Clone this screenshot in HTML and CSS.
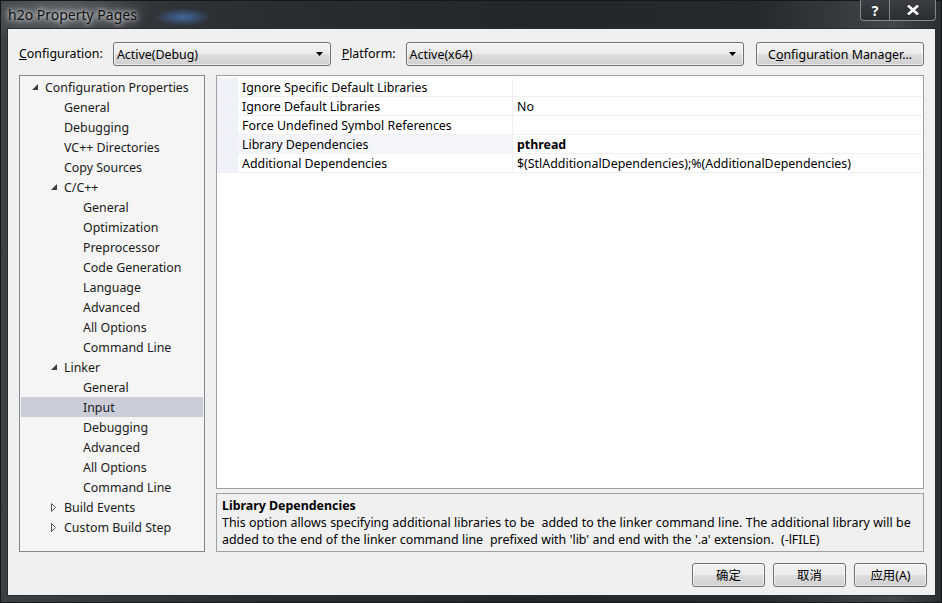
FILE: index.html
```html
<!DOCTYPE html>
<html lang="zh-CN">
<head>
  <meta charset="UTF-8">
  <title>h2o Property Pages</title>
  <link rel="stylesheet" href="styles.css">
</head>
<body>
  <div class="window">
    <div class="titlebar">
      <span class="title">h2o Property Pages</span>
      <div class="caption-btns">
        <div class="cap-btn cap-help">?</div>
        <div class="cap-btn cap-close">
          <svg width="12" height="10" viewBox="0 0 12 10"><path d="M1 0.5 L11 9.5 M11 0.5 L1 9.5" stroke="#fff" stroke-width="2.6"/></svg>
        </div>
      </div>
    </div>

    <div class="client">
      <div class="config-row">
        <span class="lbl lbl-config"><u>C</u>onfiguration:</span>
        <div class="combo combo-config">
          <span>Active(Debug)</span>
          <svg class="drop" width="7" height="4" viewBox="0 0 7 4"><path d="M0 0 H7 L3.5 4 Z" fill="#000"/></svg>
        </div>
        <span class="lbl lbl-platform"><u>P</u>latform:</span>
        <div class="combo combo-platform">
          <span>Active(x64)</span>
          <svg class="drop" width="7" height="4" viewBox="0 0 7 4"><path d="M0 0 H7 L3.5 4 Z" fill="#000"/></svg>
        </div>
        <div class="btn btn-manager">C<u>o</u>nfiguration Manager...</div>
      </div>

      <div class="main">
        <div class="tree">
          <div class="node lv0"><span class="tw"><svg width="6" height="6" viewBox="0 0 6 6"><path d="M6 0 V6 H0 Z" fill="#3c3c3c"/></svg></span>Configuration Properties</div>
          <div class="node lv1"><span class="tw"></span>General</div>
          <div class="node lv1"><span class="tw"></span>Debugging</div>
          <div class="node lv1"><span class="tw"></span>VC++ Directories</div>
          <div class="node lv1"><span class="tw"></span>Copy Sources</div>
          <div class="node lv1"><span class="tw"><svg width="6" height="6" viewBox="0 0 6 6"><path d="M6 0 V6 H0 Z" fill="#3c3c3c"/></svg></span>C/C++</div>
          <div class="node lv2"><span class="tw"></span>General</div>
          <div class="node lv2"><span class="tw"></span>Optimization</div>
          <div class="node lv2"><span class="tw"></span>Preprocessor</div>
          <div class="node lv2"><span class="tw"></span>Code Generation</div>
          <div class="node lv2"><span class="tw"></span>Language</div>
          <div class="node lv2"><span class="tw"></span>Advanced</div>
          <div class="node lv2"><span class="tw"></span>All Options</div>
          <div class="node lv2"><span class="tw"></span>Command Line</div>
          <div class="node lv1"><span class="tw"><svg width="6" height="6" viewBox="0 0 6 6"><path d="M6 0 V6 H0 Z" fill="#3c3c3c"/></svg></span>Linker</div>
          <div class="node lv2"><span class="tw"></span>General</div>
          <div class="node lv2 selected"><span class="tw"></span>Input</div>
          <div class="node lv2"><span class="tw"></span>Debugging</div>
          <div class="node lv2"><span class="tw"></span>Advanced</div>
          <div class="node lv2"><span class="tw"></span>All Options</div>
          <div class="node lv2"><span class="tw"></span>Command Line</div>
          <div class="node lv1"><span class="tw"><svg width="5" height="9" viewBox="0 0 5 9"><path d="M0.5 0.5 L4.5 4.5 L0.5 8.5 Z" fill="none" stroke="#555" stroke-width="1"/></svg></span>Build Events</div>
          <div class="node lv1"><span class="tw"><svg width="5" height="9" viewBox="0 0 5 9"><path d="M0.5 0.5 L4.5 4.5 L0.5 8.5 Z" fill="none" stroke="#555" stroke-width="1"/></svg></span>Custom Build Step</div>
        </div>

        <div class="right">
          <div class="grid">
            <div class="prow"><div class="gutter"></div><div class="pname">Ignore Specific Default Libraries</div><div class="pval"></div></div>
            <div class="prow"><div class="gutter"></div><div class="pname">Ignore Default Libraries</div><div class="pval">No</div></div>
            <div class="prow"><div class="gutter"></div><div class="pname">Force Undefined Symbol References</div><div class="pval"></div></div>
            <div class="prow active"><div class="gutter"></div><div class="pname">Library Dependencies</div><div class="pval bold">pthread</div></div>
            <div class="prow"><div class="gutter"></div><div class="pname">Additional Dependencies</div><div class="pval">$(StlAdditionalDependencies);%(AdditionalDependencies)</div></div>
          </div>
          <div class="desc">
            <div class="desc-title">Library Dependencies</div>
            <div class="desc-text">This option allows specifying additional libraries to be&nbsp; added to the linker command line. The additional library will be added to the end of the linker command line&nbsp; prefixed with 'lib' and end with the '.a' extension.&nbsp; (-lFILE)</div>
          </div>
        </div>
      </div>

      <div class="footer">
        <div class="btn btn-dlg">确定</div>
        <div class="btn btn-dlg">取消</div>
        <div class="btn btn-dlg">应用(A)</div>
      </div>
    </div>
  </div>
</body>
</html>
```

FILE: styles.css
```css
* {
  margin: 0;
  padding: 0;
  box-sizing: border-box;
}

body {
  width: 942px;
  height: 603px;
  overflow: hidden;
  background: #1c1f22;
  font-family: 'Noto Sans', 'Noto Sans CJK SC', sans-serif;
  font-size: 12.4px;
  color: #000;
}

.window {
  width: 942px;
  height: 603px;
  display: flex;
  flex-direction: column;
  padding: 0 5px 6px 6px;
  border: 1px solid #15181b;
  background:
    radial-gradient(ellipse 28px 9px at 182px 16px, rgba(70, 120, 190, 0.75), rgba(70, 120, 190, 0) 100%),
    radial-gradient(ellipse 90px 40px at 60px 10px, rgba(120, 125, 130, 0.55), rgba(120, 125, 130, 0) 100%),
    linear-gradient(to right, #3c4045 0%, #2b2e33 25%, #23262a 55%, #25282c 80%, #41454a 95%, #2a2d31 100%);
}

/* title bar */
.titlebar {
  height: 27px;
  display: flex;
  align-items: flex-start;
  justify-content: space-between;
}

.title {
  margin-top: 4px;
  margin-left: 1px;
  font-size: 14px;
  color: #111;
  text-shadow: 0 0 8px rgba(255, 255, 255, 0.9), 0 0 4px rgba(255, 255, 255, 0.9);
}

.caption-btns {
  display: flex;
  margin-top: -1px;
}

.cap-btn {
  height: 21px;
  display: flex;
  align-items: center;
  justify-content: center;
  border: 1px solid rgba(200, 205, 210, 0.55);
  border-top: none;
  background: linear-gradient(#3a3e43, #2a2d31);
  color: #fff;
  font-weight: bold;
  font-size: 14px;
}

.cap-help {
  width: 29px;
  border-radius: 0 0 0 4px;
  border-right: none;
}

.cap-close {
  width: 47px;
  border-radius: 0 0 4px 0;
}

/* client area */
.client {
  flex: 1;
  display: flex;
  flex-direction: column;
  background: #f0f0f0;
  border: 1px solid #2a2c2f;
  padding: 13px 11px 8px 11px;
}

.config-row {
  display: flex;
  align-items: center;
  height: 24px;
}

.lbl {
  line-height: 24px;
}

.lbl-config {
  width: 94px;
}

.lbl-platform {
  width: 64px;
  margin-left: 11px;
}

.combo {
  height: 24px;
  display: flex;
  align-items: center;
  justify-content: space-between;
  padding: 0 7px 0 3px;
  border: 1px solid #707070;
  border-radius: 3px;
  background: linear-gradient(#f2f2f2 0%, #ebebeb 50%, #dddddd 51%, #cfcfcf 100%);
  box-shadow: inset 0 0 0 1px rgba(255, 255, 255, 0.6);
}

.combo-config {
  width: 218px;
}

.combo-platform {
  width: 339px;
}

.btn {
  height: 24px;
  display: flex;
  align-items: center;
  justify-content: center;
  border: 1px solid #707070;
  border-radius: 3px;
  background: linear-gradient(#f2f2f2 0%, #ebebeb 50%, #dddddd 51%, #cfcfcf 100%);
  box-shadow: inset 0 0 0 1px rgba(255, 255, 255, 0.6);
}

.btn-manager {
  width: 168px;
  margin-left: 12px;
}

/* tree + grid */
.main {
  display: flex;
  height: 477px;
  margin-top: 9px;
}

.tree {
  width: 186px;
  border: 1px solid #828790;
  background: #f5f5f5;
  padding: 1px;
}

.node {
  height: 20px;
  display: flex;
  align-items: center;
  white-space: nowrap;
  color: #1a1a1a;
}

.node.lv0 { padding-left: 5px; }
.node.lv1 { padding-left: 24px; }
.node.lv2 { padding-left: 43px; }

.tw {
  width: 19px;
  display: flex;
  align-items: center;
  padding-left: 6px;
}

.node.selected {
  background: #cbcdd9;
}

.right {
  flex: 1;
  display: flex;
  flex-direction: column;
  margin-left: 11px;
}

.grid {
  flex: 1;
  border: 1px solid #a0a0a0;
  background: #fff;
}

.prow {
  display: flex;
  height: 19px;
  border-bottom: 1px solid #f0f0f2;
}

.prow:first-child {
  margin-top: 2px;
}

.gutter {
  width: 21px;
  background: #f0f2f9;
}

.pname,
.pval {
  padding-left: 4px;
  line-height: 19px;
  white-space: nowrap;
}

.pname {
  width: 275px;
  border-right: 1px solid #f0f0f2;
}

.prow.active .pname {
  background: #f3f5fa;
}

.pval {
  flex: 1;
}

.bold {
  font-weight: bold;
}

.desc {
  height: 59px;
  margin-top: 4px;
  border: 1px solid #a0a0a0;
  background: #f0f0f0;
  padding: 3px 5px 2px 5px;
  line-height: 17px;
}

.desc-title {
  font-weight: bold;
}

.desc-text {
  word-spacing: 0.2px;
}

/* dialog buttons */
.footer {
  display: flex;
  justify-content: flex-end;
  gap: 8px;
  margin-top: 11px;
  margin-right: -3px;
}

.btn-dlg {
  width: 73px;
}
```
